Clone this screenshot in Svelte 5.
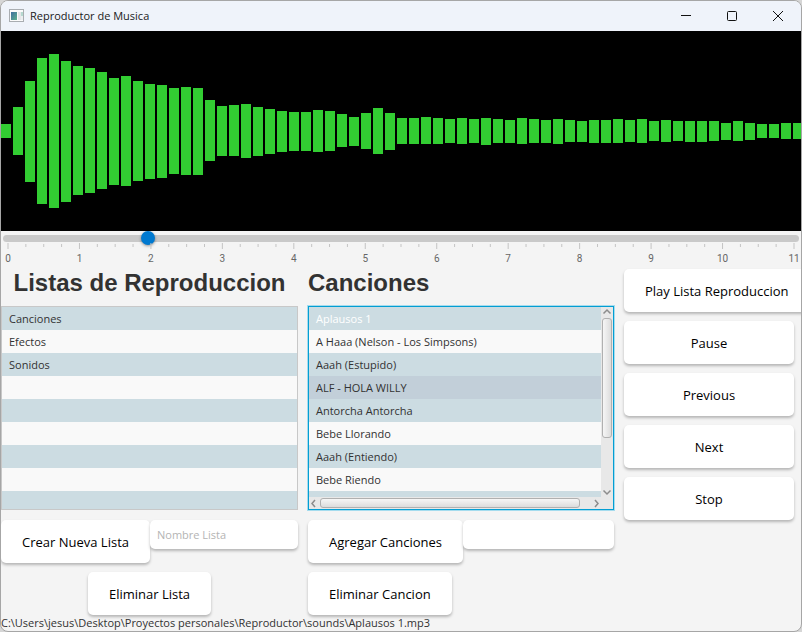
<script>
  // [top, bottom] of each bar on the 200px high waveform canvas
  const bars = [
    [93, 107], [76, 124], [50, 151], [27, 173], [23, 177], [30, 171], [35, 164], [37, 162], [41, 158],
    [47, 154], [45, 155], [50, 150], [53, 148], [54, 147], [57, 143], [56, 144], [57, 144], [69, 130],
    [75, 125], [74, 125], [73, 127], [76, 125], [78, 123], [80, 121], [81, 120], [81, 120], [79, 121],
    [80, 120], [83, 116], [86, 115], [82, 118], [77, 123], [82, 119], [87, 113], [87, 113], [86, 113],
    [87, 113], [88, 112], [87, 113], [88, 112], [87, 114], [88, 112], [89, 112], [87, 113], [88, 112],
    [89, 112], [88, 113], [89, 111], [90, 111], [89, 112], [89, 112], [88, 112], [89, 111], [88, 112],
    [90, 110], [89, 111], [90, 110], [90, 111], [90, 111], [90, 110], [92, 109], [90, 110], [92, 109],
    [93, 107], [93, 107], [92, 108], [92, 108]
  ];

  const ticks = Array.from({ length: 45 }, (_, i) => i);
  const lists = ['Canciones', 'Efectos', 'Sonidos', '', '', '', '', '', ''];
  const songs = [
    'Aplausos 1',
    'A Haaa (Nelson - Los Simpsons)',
    'Aaah (Estupido)',
    'ALF - HOLA WILLY',
    'Antorcha Antorcha',
    'Bebe Llorando',
    'Aaah (Entiendo)',
    'Bebe Riendo',
    ''
  ];

  let position = $state(1.94);
  let selected = $state(0);
  let newList = $state('');
  let songName = $state('');
</script>

<div class="window">
  <header class="titlebar">
    <svg class="app-icon" width="16" height="14" viewBox="0 0 16 14" aria-hidden="true">
      <defs>
        <linearGradient id="pane" x1="0" y1="0" x2="1" y2="1">
          <stop offset="0" stop-color="#3f6fa0" />
          <stop offset="1" stop-color="#5fb08c" />
        </linearGradient>
      </defs>
      <rect x="0.5" y="0.5" width="14" height="12" fill="#fbfbfb" stroke="#a9adb1" />
      <rect x="2" y="3" width="6" height="8" fill="url(#pane)" />
      <rect x="9" y="3" width="3" height="8" fill="#e4e6e8" />
      <rect x="12" y="3" width="2" height="4" fill="#b5d8cf" />
      <rect x="12" y="7" width="2" height="4" fill="#eceef0" />
    </svg>
    <span class="title">Reproductor de Musica</span>
    <button class="caption" aria-label="Minimizar">
      <svg width="12" height="12" viewBox="0 0 12 12"><path d="M1 5.5H11" /></svg>
    </button>
    <button class="caption" aria-label="Maximizar">
      <svg width="12" height="12" viewBox="0 0 12 12"><rect x="1.5" y="1.5" width="9" height="9" rx="1" /></svg>
    </button>
    <button class="caption" aria-label="Cerrar">
      <svg width="12" height="12" viewBox="0 0 12 12"><path d="M1 1L11 11M11 1L1 11" /></svg>
    </button>
  </header>

  <svg class="wave" aria-hidden="true">
    {#each bars as [top, bottom], i}
      <rect x={i * 12} y={top} width="10" height={bottom - top} />
    {/each}
  </svg>

  <div class="timeline">
    <input type="range" min="0" max="11" step="any" aria-label="Posicion" bind:value={position} />
    <svg class="scale" aria-hidden="true">
      {#each ticks as t}
        {@const x = (t / 44) * 100 + '%'}
        <line x1={x} x2={x} y1={t % 4 ? 1 : 0} y2={t % 4 ? 4 : 6} />
        {#if t % 4 === 0}
          <text {x} y="19">{t / 4}</text>
        {/if}
      {/each}
    </svg>
  </div>

  <main>
    <section class="column lists">
      <h1>Listas de Reproduccion</h1>
      <ul class="list">
        {#each lists as name}
          <li>{name}</li>
        {/each}
      </ul>
      <div class="row">
        <button class="action">Crear Nueva Lista</button>
        <input class="field" type="text" placeholder="Nombre Lista" aria-label="Nombre Lista" bind:value={newList} />
      </div>
      <div class="row centered">
        <button class="action">Eliminar Lista</button>
      </div>
    </section>

    <section class="column">
      <h1>Canciones</h1>
      <div class="list focused">
        <ul>
          {#each songs as name, i}
            <li class:selected={i === selected} class:hovered={i === 3}>{name}</li>
          {/each}
        </ul>
        <div class="bar vertical">
          <svg width="10" height="10" viewBox="0 0 10 10"><path d="M1.5 6.5L5 3L8.500 6.5" /></svg>
          <div class="track"><div class="thumb"></div></div>
          <svg width="10" height="10" viewBox="0 0 10 10"><path d="M1.5 3.5L5 7L8.500 3.5" /></svg>
        </div>
        <div class="bar horizontal">
          <svg width="10" height="10" viewBox="0 0 10 10"><path d="M6 2L3 5.500L6 9" /></svg>
          <div class="track"><div class="thumb"></div></div>
          <svg width="10" height="10" viewBox="0 0 10 10"><path d="M4 2L7 5.500L4 9" /></svg>
        </div>
      </div>
      <div class="row">
        <button class="action">Agregar Canciones</button>
        <input class="field" type="text" aria-label="Nombre Cancion" bind:value={songName} />
      </div>
      <div class="row">
        <button class="action">Eliminar Cancion</button>
      </div>
    </section>

    <nav class="controls">
      <button class="action">Play Lista Reproduccion</button>
      <button class="action">Pause</button>
      <button class="action">Previous</button>
      <button class="action">Next</button>
      <button class="action">Stop</button>
    </nav>
  </main>

  <footer>C:\Users\jesus\Desktop\Proyectos personales\Reproductor\sounds\Aplausos 1.mp3</footer>
</div>

<style>
  :global(body) {
    margin: 0;
    background: #d6d6d6;
  }

  .window {
    box-sizing: border-box;
    min-height: 100vh;
    display: flex;
    flex-direction: column;
    border: 1px solid #a6a6a6;
    border-radius: 8px;
    overflow: hidden;
    background: #f4f4f4;
    color: #323232;
    font: 11px/16px 'Segoe UI', 'Open Sans', 'Noto Sans', sans-serif;
  }

  button,
  input {
    font-family: inherit;
    margin: 0;
    border: 0;
    box-sizing: border-box;
  }

  ul {
    margin: 0;
    padding: 0;
    list-style: none;
  }

  .titlebar {
    display: flex;
    align-items: center;
    height: 30px;
    padding-left: 8px;
    background: #eff3fa;
    color: #1a1a1a;
  }

  .title {
    flex: 1;
    padding-left: 5px;
    white-space: nowrap;
  }

  .caption {
    display: grid;
    place-items: center;
    width: 46px;
    height: 30px;
    padding: 0;
    background: none;
  }

  .caption svg {
    fill: none;
    stroke: #111;
  }

  .wave {
    display: block;
    width: 100%;
    height: 200px;
    background: #000;
  }

  .wave rect {
    fill: #32cd32;
  }

  .timeline {
    display: flex;
    flex-direction: column;
    height: 38px;
  }

  input[type='range'] {
    appearance: none;
    height: 15px;
    margin: 0 2px;
    background: none;
  }

  input[type='range']::-webkit-slider-runnable-track {
    height: 7px;
    border-radius: 4px;
    background: #c9c9c9;
  }

  input[type='range']::-webkit-slider-thumb {
    appearance: none;
    width: 14px;
    height: 14px;
    margin-top: -4px;
    border-radius: 50%;
    background: #0079d0;
    box-shadow: 0 1px 3px rgba(0, 0, 0, 0.4);
  }

  .scale {
    height: 22px;
    margin: -3px 7px 0;
    overflow: visible;
    pointer-events: none;
  }

  .scale line {
    stroke: #c4c4c4;
  }

  .scale text {
    fill: #666;
    font: 10px Roboto, 'Open Sans', sans-serif;
    text-anchor: middle;
  }

  main {
    display: grid;
    grid-template-columns: minmax(0, 297fr) minmax(0, 306fr) minmax(0, 177fr);
    gap: 10px;
  }

  .column,
  .controls {
    display: flex;
    flex-direction: column;
    gap: 9px;
  }

  h1 {
    margin: 0;
    height: 28px;
    font: bold 24px/28px 'Liberation Sans', Arial, sans-serif;
    white-space: nowrap;
  }

  .lists h1 {
    text-align: center;
  }

  .list {
    box-sizing: border-box;
    height: 204px;
    margin-bottom: 1px;
    border: 1px solid #c8c8c8;
    overflow: hidden;
  }

  li {
    box-sizing: border-box;
    height: 23px;
    padding: 0 7px;
    line-height: 23px;
    white-space: nowrap;
    background: #f9f9f9;
  }

  li:nth-child(odd) {
    background: #ccdce2;
  }

  li.hovered {
    background: #c2cfd9;
  }

  li.selected {
    color: #fff;
  }

  .focused {
    display: grid;
    grid-template: 190px 12px / minmax(0, 1fr) 12px;
    border-color: #039ed3;
    box-shadow: 0 0 0 1px #a5dcee;
    background: #e8e8e8;
  }

  .focused ul {
    overflow: hidden;
  }

  .bar {
    display: flex;
    align-items: center;
  }

  .bar svg {
    flex: none;
    fill: none;
    stroke: #8c8c8c;
    stroke-width: 1.5;
  }

  .bar .track {
    flex: 1;
  }

  .thumb {
    box-sizing: border-box;
    border: 1px solid #b0b0b0;
    border-radius: 3px;
  }

  .vertical {
    flex-direction: column;
  }

  .vertical .track {
    padding-top: 1px;
  }

  .vertical .thumb {
    width: 10px;
    height: 71%;
    background: linear-gradient(90deg, #f6f6f6, #dcdcdc);
  }

  .horizontal .track {
    padding-left: 1px;
  }

  .horizontal .thumb {
    width: 96%;
    height: 10px;
    background: linear-gradient(#f6f6f6, #dcdcdc);
  }

  .row {
    display: flex;
    align-items: flex-start;
  }

  .centered {
    justify-content: center;
  }

  .action {
    flex: none;
    height: 43px;
    padding: 0 21px;
    border-radius: 5px;
    background: #fff;
    box-shadow: 0 2px 3px rgba(0, 0, 0, 0.26);
    color: #000;
    font-size: 13px;
    white-space: nowrap;
  }

  .field {
    flex: 1;
    min-width: 0;
    height: 29px;
    padding: 0 7px;
    border-radius: 5px;
    background: #fff;
    box-shadow: 0 2px 3px rgba(0, 0, 0, 0.26);
    font-size: 11px;
  }

  .field::placeholder {
    color: #b4b4b4;
  }

  .controls {
    padding: 0 7px 0 0;
  }

  .controls .action {
    width: max-content;
    min-width: 100%;
  }

  footer {
    white-space: nowrap;
  }
</style>
